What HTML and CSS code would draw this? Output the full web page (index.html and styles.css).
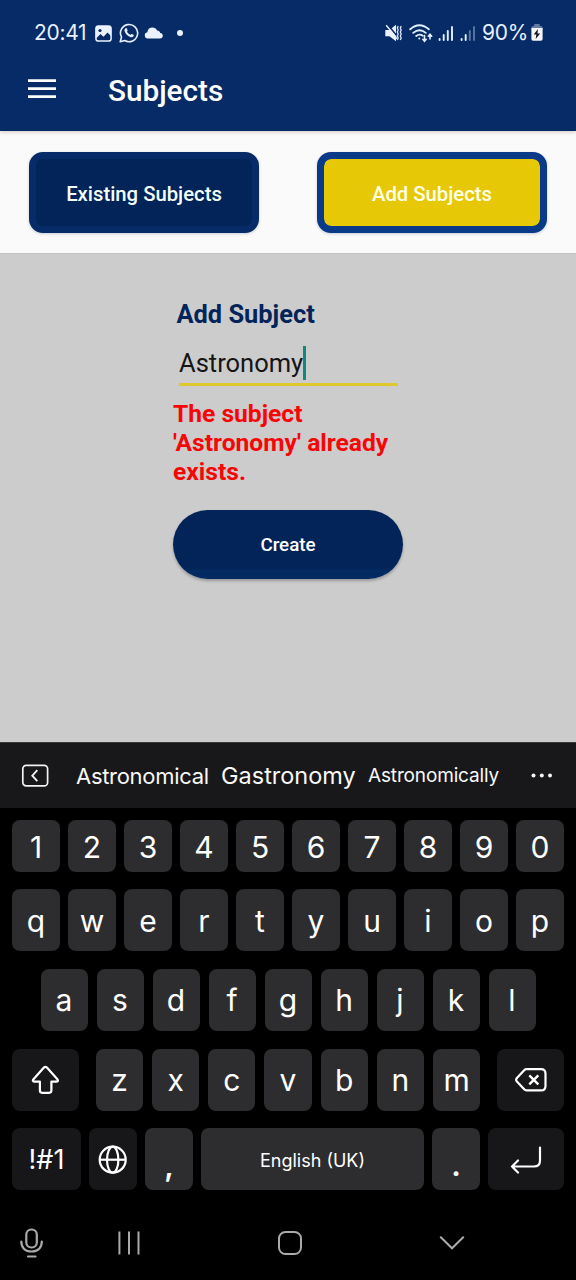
FILE: index.html
```html
<!DOCTYPE html>
<html lang="en">
<head>
<meta charset="utf-8">
<title>Subjects</title>
<link rel="stylesheet" href="styles.css">
</head>
<body>
<div class="phone">
  <header class="header">
    <div class="status">
      <span class="clock">20:41</span>
      <svg class="ic-photo" width="17" height="17" viewBox="0 0 17 17"><rect x=".9" y=".9" width="15.2" height="15.2" rx="2.6" fill="none" stroke="#eaf2ff" stroke-width="1.5"/><path d="M1 2.5Q1 1 2.5 1h12Q16 1 16 2.5V11l-3.500-3.600-4 4.300L5.500 9 1 13.500z" fill="#eaf2ff"/><circle cx="5" cy="5.500" r="1.600" fill="#072b66"/></svg>
      <svg class="ic-chat" width="20" height="20" viewBox="0 0 20 20" fill="none" stroke="#e3efff" stroke-width="1.600"><path d="M1.200 18.800l1.300-4.600A8.600 8.600 0 1 1 5.700 17.500z" stroke-linejoin="round"/><path d="M6.300 5.600c.8-.8 1.400-.6 1.700.1l.6 1.500c.2.500-.7 1.100-.5 1.500.7 1.400 1.800 2.400 3.200 3 .4.200 1-.9 1.500-.7l1.600.8c.6.3.5 1-.1 1.600-.7.800-1.900 1-3.100.5-2.700-1-4.700-3-5.500-5.400-.4-1.200-.2-2.200.6-2.900z" fill="#e3efff" stroke="none"/></svg>
      <svg class="ic-cloud" width="19" height="12" viewBox="0 0 19 12" fill="#eaf2ff"><path d="M3.500 11.500a3.200 3.200 0 0 1-.2-6.300C3.700 1.800 6 .4 8.300.4c2.200 0 4 1.100 4.800 3.100 1.700 0 2.800.9 3.100 2.500 1.600.2 2.600 1.200 2.600 2.800 0 1.700-1.200 2.700-2.800 2.700z"/></svg>
      <i class="dot"></i>
      <span class="grow"></span>
      <svg class="ic-mute" width="18" height="18" viewBox="0 0 18 18"><path d="M.3 6h4.200L11 .8v16.400l-6.500-5H.3z" fill="#eaf2ff"/><path d="M2.200 0l11 13.500" stroke="#072b66" stroke-width="1.600"/><path d="M1.200 1.300L12 14.600" stroke="#eaf2ff" stroke-width="1.400"/><path d="M13.200 2l-.9 2 .9 2-.9 2 .9 2-.9 2 .9 2-.9 2M16.200 2l-.9 2 .9 2-.9 2 .9 2-.9 2 .9 2-.9 2" fill="none" stroke="#dfeaff" stroke-width="1.300"/></svg>
      <svg class="ic-wifi" width="25" height="19" viewBox="0 0 25 19" fill="none" stroke="#e3efff" stroke-width="1.800" stroke-linecap="round"><path d="M1.200 5.300Q10.300-2.700 19.800 5.300M4.200 8.900q6.300-5.400 12.600 0M7.200 12q3.300-2.500 6.600-.2"/><circle cx="10.300" cy="14.500" r="1" fill="#e3efff" stroke="none"/><path d="M15.500 11.500V17m-1.700-1.700l1.700 2 1.700-2M21 15v-4.500m-1.700 1.700l1.700-2 1.700 2" stroke-width="1.600"/></svg>
      <svg class="ic-signal" width="16" height="17" viewBox="0 0 16 17" stroke="#e3efff" stroke-width="1.900" stroke-linecap="round"><path d="M1.600 14v1M5.700 10v5M9.800 6v9M14 2v13"/></svg>
      <svg class="ic-signal2" width="16" height="17" viewBox="0 0 16 17" stroke="#e3efff" stroke-width="1.900" stroke-linecap="round"><path d="M1.600 14v1M5.700 10v5"/><path d="M9.800 6v9M14 2v13" stroke="#5a76a4"/></svg>
      <span class="percent">90%</span>
      <svg class="ic-battery" width="12" height="18" viewBox="0 0 12 18"><path d="M3.200 0h5.500v2H10Q11.500 2 11.500 3.500V6H.5V3.500Q.5 2 2 2h1.200z" fill="#667da3"/><path d="M.4 4h11.200v11q0 1.700-1.700 1.700H2.100Q.4 16.700.4 15z" fill="#f5f5f7"/><path d="M6.900 5L2.700 10.600h2.600L4.700 15 9.200 9.400H6.500z" fill="#151525"/></svg>
    </div>
    <div class="toolbar">
      <svg class="menu" width="28" height="20" viewBox="0 0 28 20" fill="#fff"><path d="M0 .3h28v2.700H0zM0 8.300h28v2.700H0zM0 16.300h28v2.700H0z"/></svg>
      <h1 class="title">Subjects</h1>
    </div>
  </header>

  <nav class="tabs">
    <button class="tab tab-existing">Existing Subjects</button>
    <button class="tab tab-add">Add Subjects</button>
  </nav>

  <main class="content">
    <div class="form">
      <h2 class="form-title">Add Subject</h2>
      <div class="field"><span class="value">Astronomy</span><i class="caret"></i></div>
      <p class="error">The subject<br>'Astronomy' already<br>exists.</p>
      <button class="create">Create</button>
    </div>
  </main>

  <section class="keyboard">
    <div class="suggestions">
      <svg class="collapse" width="28" height="24" viewBox="0 0 28 24" fill="none" stroke="#f2f2f2"><rect x="1.800" y="1.300" width="24.800" height="20.600" rx="3.500" stroke-width="1.700"/><path d="M16.300 6.200L11.300 11.700l5 5.500" stroke-width="1.900"/></svg>
      <span class="word w1">Astronomical</span>
      <span class="word w2">Gastronomy</span>
      <span class="word w3">Astronomically</span>
      <svg class="more" width="22" height="6" viewBox="0 0 22 6" fill="#f5f5f5"><circle cx="2.500" cy="2.500" r="2"/><circle cx="10.800" cy="2.500" r="2"/><circle cx="19" cy="2.500" r="2"/></svg>
    </div>
    <div class="row row-num">
      <b class="key">1</b><b class="key">2</b><b class="key">3</b><b class="key">4</b><b class="key">5</b><b class="key">6</b><b class="key">7</b><b class="key">8</b><b class="key">9</b><b class="key">0</b>
    </div>
    <div class="row row-q">
      <b class="key">q</b><b class="key">w</b><b class="key">e</b><b class="key">r</b><b class="key">t</b><b class="key">y</b><b class="key">u</b><b class="key">i</b><b class="key">o</b><b class="key">p</b>
    </div>
    <div class="row row-a">
      <b class="key">a</b><b class="key">s</b><b class="key">d</b><b class="key">f</b><b class="key">g</b><b class="key">h</b><b class="key">j</b><b class="key">k</b><b class="key">l</b>
    </div>
    <div class="row row-z">
      <b class="key dark shift"><svg width="28" height="30" viewBox="0 0 28 30" fill="none" stroke="#fff" stroke-width="2.200" stroke-linejoin="round"><path d="M12.900 2.600q1.500-1.500 3 0L26.400 14.300q1.500 2-.8 2.300H20.400v9q0 2.200-2.200 2.200h-7.100q-2.200 0-2.200-2.200v-9H3.300q-2.400-.3-.8-2.300z"/></svg></b>
      <div class="letters"><b class="key">z</b><b class="key">x</b><b class="key">c</b><b class="key">v</b><b class="key">b</b><b class="key">n</b><b class="key">m</b></div>
      <b class="key dark back"><svg width="34" height="26" viewBox="0 0 34 26" fill="none" stroke="#fff" stroke-width="2.200" stroke-linejoin="round"><path d="M12.500 2.200h14.500q4.500 0 4.500 4.500v12.200q0 4.500-4.500 4.500H12.500q-1.300 0-2.300-1.100l-7.300-7.800q-1.500-1.700 0-3.400l7.300-7.800Q11.200 2.200 12.500 2.200z"/><path d="M15.300 8.300l9 9M24.300 8.300l-9 9" stroke-width="2.400"/></svg></b>
    </div>
    <div class="row row-bottom">
      <b class="key dark sym">!#1</b>
      <b class="key dark globe"><svg width="30" height="30" viewBox="0 0 30 30" fill="none" stroke="#fff" stroke-width="2.200"><circle cx="14.700" cy="14.700" r="13"/><ellipse cx="14.700" cy="14.700" rx="5.700" ry="13"/><path d="M2 14.700h26"/></svg></b>
      <b class="key comma">,</b>
      <b class="key space">English (UK)</b>
      <b class="key period">.</b>
      <b class="key dark enter"><svg width="32" height="28" viewBox="0 0 32 28" fill="none" stroke="#fff" stroke-width="2.200" stroke-linecap="round" stroke-linejoin="round"><path d="M30 1.500v13q0 6-6 6H2M8 14.500l-6 6 6 6"/></svg></b>
    </div>
    <div class="navbar">
      <svg class="mic" width="24" height="32" viewBox="0 0 24 32" fill="none" stroke="#aaa" stroke-width="2.200" stroke-linecap="round"><rect x="6.300" y="2.500" width="10.500" height="18" rx="5"/><path d="M1.300 14.500c0 6.500 4 10 10.250 10S21.800 21 21.800 14.500M8 29.500h7.500"/></svg>
      <svg class="recents" width="24" height="24" viewBox="0 0 24 24" stroke="#aaa" stroke-width="2"><path d="M2.400 .5v23M12 .5v23M21.500 .5v23"/></svg>
      <svg class="home" width="26" height="26" viewBox="0 0 26 26" fill="none" stroke="#aaa" stroke-width="2"><rect x="2" y="2" width="22" height="22" rx="6.500"/></svg>
      <svg class="hide" width="26" height="14" viewBox="0 0 26 14" fill="none" stroke="#aaa" stroke-width="2" stroke-linecap="round"><path d="M1.800 1.200L13 12.300 24.200 1.200"/></svg>
    </div>
  </section>
</div>
</body>
</html>
```

FILE: styles.css
```css
* { box-sizing: border-box; }
body { margin: 0; background: #000; font-family: Roboto, sans-serif; }
svg { display: block; flex: none; }
button { border: 0; padding: 0; font-family: inherit; }
.phone { width: 576px; height: 1280px; display: flex; flex-direction: column; overflow: hidden; }

.header { height: 131px; flex: none; background: #072b66; color: #fff; box-shadow: 0 1px 4px rgba(90, 50, 20, .25); position: relative; }
.status { display: flex; align-items: center; height: 66px; padding: 0 33px 0 34px; font: 400 21px/26px Inter, sans-serif; color: #e6f0ff; }
.clock { width: 61px; letter-spacing: -.3px; }
.ic-photo { margin-right: 7px; }
.ic-chat { margin-right: 5px; }
.ic-cloud { margin-right: 14px; }
.dot { width: 6px; height: 6px; border-radius: 50%; background: #eaf2ff; }
.grow { flex: 1; }
.ic-mute { margin-right: 6px; }
.ic-wifi { margin-right: 4px; }
.ic-signal { margin-right: 6px; }
.ic-signal2 { margin-right: 6px; }
.percent { width: 49px; letter-spacing: -.3px; }
.toolbar { display: flex; align-items: center; height: 50px; padding-left: 28px; }
.menu { margin-top: -4px; }
.title { margin: 0 0 0 52px; font: 500 29.700px/36px Roboto, sans-serif; }

.tabs { height: 122px; flex: none; display: flex; justify-content: space-between; padding: 21px 29px 20px; background: #fafafa; }
.tab { width: 230px; height: 81px; border-radius: 14px; border: 7px solid #072b66; color: #f4fff9; font-size: 20.300px; font-weight: 500; padding-top: 2px; box-shadow: 0 1px 3px rgba(50, 70, 110, .25); }
.tab-existing { background: #022459; }
.tab-add { border-color: #093a87; background: linear-gradient(#e6c807, #e6c807) padding-box, #093a87; color: #fdffe8; }

.content { height: 489px; flex: none; background: #ccc; padding: 44px 0 0 173px; border-top: 1px solid #c4c4c4; }
.form { width: 230px; }
.form-title { margin: 0; padding-left: 3.500px; font-size: 25.400px; line-height: 32px; font-weight: 700; color: #022459; }
.field { display: flex; align-items: center; width: 219px; height: 43px; margin: 13px 0 0 6px; border-bottom: 3px solid #dfc82e; font-size: 25.500px; color: #151515; }
.caret { width: 3px; height: 34px; background: #0c8c7c; }
.error { margin: 13px 0 0; font-size: 24.600px; line-height: 29px; font-weight: 700; color: #f80606; white-space: nowrap; }
.create { display: block; width: 230px; height: 69px; margin-top: 24px; border-radius: 35px; background: linear-gradient(#022459 58px, #042a62 60px); color: #fff; font-size: 18.800px; font-weight: 500; padding-top: 1px; box-shadow: 0 2px 3px rgba(0, 0, 0, .25); }

.keyboard { height: 538px; flex: none; background: #000; color: #fff; font-family: Inter, sans-serif; }
.suggestions { height: 66px; display: flex; align-items: center; background: #18181a; padding: 0 23px 0 21px; border-top: 1px solid #38383a; color: #f8f8f8; }
.word { white-space: nowrap; }
.w1 { width: 145px; margin-left: 27px; font-size: 22px; letter-spacing: -.3px; }
.w2 { width: 147px; font-size: 23.500px; }
.w3 { width: 133px; font-size: 19px; letter-spacing: -.15px; }
.more { margin-left: auto; }
.row { display: flex; gap: 8px; padding: 0 12px; }
.key { display: flex; align-items: center; justify-content: center; width: 48px; height: 62px; border-radius: 8px; background: #2d2d2f; font-size: 30px; font-weight: 400; line-height: 36px; padding-top: 1px; }
.dark { background: #17171a; }
.row-num { padding-top: 12px; }
.row-num .key { height: 52px; padding-top: 2px; }
.row-q { padding-top: 17px; }
.row-a { padding: 18px 40px 0 40.500px; gap: 9px; }
.row-a .key { width: 47px; padding-top: 0; }
.row-z { padding-top: 17.500px; gap: 17px; }
.letters { display: flex; gap: 9px; }
.letters .key { width: 47.200px; }
.shift, .back { width: 67px; }
.row-bottom { padding-top: 17.500px; }
.row-bottom .sym { width: 69px; font-size: 27px; padding-top: 2px; }
.row-bottom .space { width: 223px; font-size: 18px; padding-top: 3px; }
.row-bottom .comma, .row-bottom .period { align-items: flex-end; font-weight: 600; padding-bottom: 7px; }
.row-bottom .enter { width: 76px; }
.navbar { display: flex; align-items: center; height: 90px; padding: 15px 0 0 20px; }
.recents { margin-left: 73px; }
.home { margin-left: 136px; }
.hide { margin-left: 136px; }
```
